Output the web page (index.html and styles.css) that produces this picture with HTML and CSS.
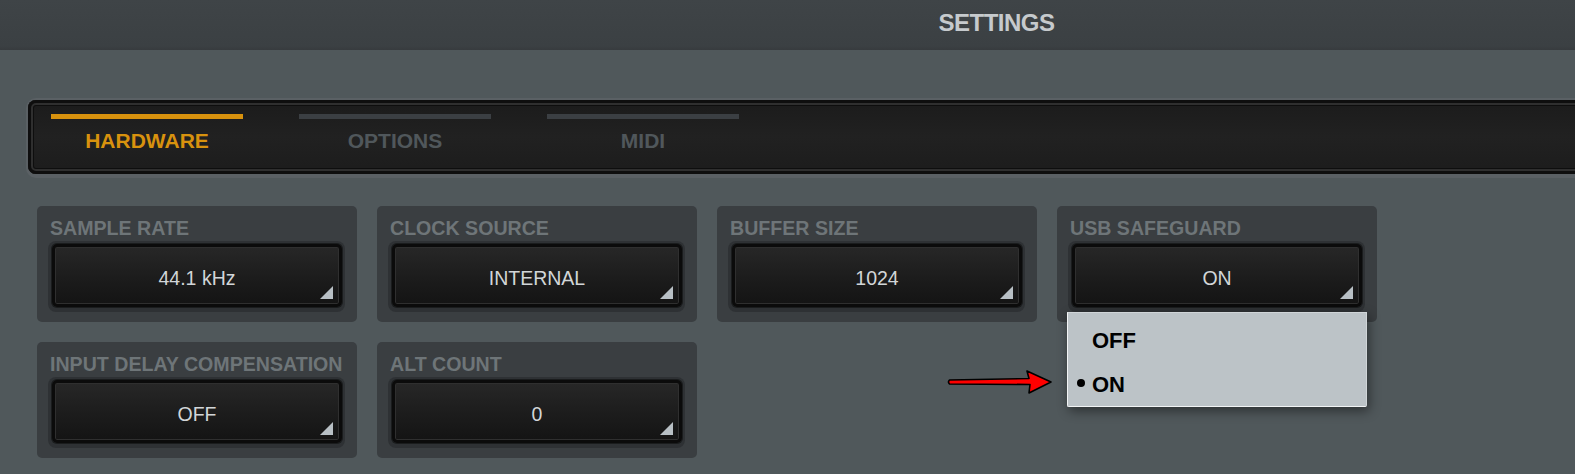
FILE: index.html
```html
<!DOCTYPE html>
<html>
<head>
<meta charset="utf-8">
<title>Settings</title>
<link rel="stylesheet" href="styles.css">
</head>
<body>
<div class="page">
  <header class="header"><h1 class="title">SETTINGS</h1></header>
  <main class="main">
    <div class="tabbar">
      <div class="tabframe">
        <div class="tab active"><span class="tab-line"></span><span class="tab-label">HARDWARE</span></div>
        <div class="tab"><span class="tab-line"></span><span class="tab-label">OPTIONS</span></div>
        <div class="tab"><span class="tab-line"></span><span class="tab-label">MIDI</span></div>
      </div>
    </div>
    <div class="grid">
      <div class="card">
        <div class="label">SAMPLE RATE</div>
        <div class="ring"><div class="select"><span class="value">44.1 kHz</span><span class="corner"></span></div></div>
      </div>
      <div class="card">
        <div class="label">CLOCK SOURCE</div>
        <div class="ring"><div class="select"><span class="value">INTERNAL</span><span class="corner"></span></div></div>
      </div>
      <div class="card">
        <div class="label">BUFFER SIZE</div>
        <div class="ring"><div class="select"><span class="value">1024</span><span class="corner"></span></div></div>
      </div>
      <div class="card card-open">
        <div class="label">USB SAFEGUARD</div>
        <div class="ring"><div class="select"><span class="value">ON</span><span class="corner"></span></div></div>
        <div class="menu">
          <div class="menu-item"><span class="bullet hidden"></span>OFF</div>
          <div class="menu-item"><span class="bullet"></span>ON</div>
        </div>
      </div>
      <div class="card">
        <div class="label">INPUT DELAY COMPENSATION</div>
        <div class="ring"><div class="select"><span class="value">OFF</span><span class="corner"></span></div></div>
      </div>
      <div class="card">
        <div class="label">ALT COUNT</div>
        <div class="ring"><div class="select"><span class="value">0</span><span class="corner"></span></div></div>
      </div>
    </div>
  </main>
  <svg class="arrow" width="116" height="32" viewBox="0 0 116 32">
    <path d="M9.5 14 L89 12.5 L87 5 L111 16 L89 27 L90 18.5 L9.5 18 Q7.5 16 9.5 14 Z" fill="#ff0000" stroke="#000" stroke-width="1.6" stroke-linejoin="round"/>
  </svg>
</div>
</body>
</html>
```
FILE: styles.css
```css
html, body {
  margin: 0;
  padding: 0;
}
body {
  background: #50585b;
  font-family: "Liberation Sans", Arial, sans-serif;
  overflow: hidden;
  width: 1575px;
  height: 474px;
}
.page {
  position: relative;
  width: 1575px;
  height: 474px;
}
.header {
  height: 50px;
  box-sizing: border-box;
  background: linear-gradient(#3f4447, #3b4043 92%, #373b3e);
  display: flex;
  align-items: center;
  justify-content: center;
  padding-left: 418px;
}
.title {
  margin: 0;
  font-size: 24px;
  font-weight: bold;
  letter-spacing: -0.5px;
  color: #c6cacd;
  line-height: 28px;
  padding-bottom: 4px;
}
.main {
  padding: 48px 0 0 26px;
}
.tabbar {
  margin-right: -30px;
  padding: 2px 0 4px 2px;
  background: #5a6064;
  border-radius: 10px 0 0 10px;
}
.tabframe {
  height: 74px;
  box-sizing: border-box;
  border-radius: 8px 0 0 8px;
  background: linear-gradient(#1b1b1b, #212121 50%, #1c1c1c);
  box-shadow: inset 0 0 0 3px #0e0e0e, inset 0 0 0 5px #2f2f2f, inset 0 0 0 6px #0e0e0e;
  display: flex;
  gap: 56px;
  padding: 14px 0 0 23px;
}
.tab {
  width: 192px;
  display: flex;
  flex-direction: column;
  align-items: center;
}
.tab-line {
  align-self: stretch;
  height: 5px;
  background: #3b3f43;
}
.tab-label {
  margin-top: 10px;
  font-size: 21px;
  font-weight: bold;
  line-height: 24px;
  color: #50575b;
}
.tab.active .tab-line {
  background: #d8920e;
}
.tab.active .tab-label {
  color: #d8920e;
}
.grid {
  margin: 28px 0 0 11px;
  display: grid;
  grid-template-columns: repeat(4, 320px);
  grid-auto-rows: 116px;
  gap: 20px;
}
.card {
  position: relative;
  background: #3a3e41;
  border-radius: 5px;
  padding: 11px 12px 10px 11px;
  box-sizing: border-box;
  display: flex;
  flex-direction: column;
}
.label {
  margin-left: 2px;
  font-size: 19.6px;
  font-weight: bold;
  line-height: 22px;
  color: #6e7578;
  white-space: nowrap;
}
.ring {
  margin-top: 2px;
  height: 71px;
  box-sizing: border-box;
  padding: 3px 3px 5px 4px;
  background: #2e3134;
  border-radius: 8px;
}
.select {
  position: relative;
  height: 100%;
  box-sizing: border-box;
  border: 3px solid #0b0b0b;
  border-radius: 5px;
  background: linear-gradient(#272727, #1c1c1c 55%, #141414);
  box-shadow: inset 0 0 0 1px #2f2f2f, 0 0 0 1px #1a1c1d;
  display: flex;
  align-items: center;
  justify-content: center;
  padding-top: 5px;
}
.value {
  font-size: 19.5px;
  line-height: 24px;
  color: #d2d6d8;
}
.corner {
  position: absolute;
  right: 6px;
  bottom: 5px;
  width: 13px;
  height: 13px;
  background: #b8c0c5;
  clip-path: polygon(100% 0, 100% 100%, 0 100%);
}
.menu {
  position: absolute;
  left: 10px;
  top: 106px;
  width: 300px;
  height: 95px;
  box-sizing: border-box;
  padding-top: 5.5px;
  background: #bcc3c7;
  border-left: 1px solid #f2f4f5;
  border-bottom: 1px solid #f2f4f5;
  border-top: 1px solid #d0d5d8;
  border-right: 1px solid #d0d5d8;
  border-radius: 0 0 2px 2px;
  box-shadow: 2px 4px 12px rgba(0, 0, 0, 0.45);
  z-index: 2;
}
.menu-item {
  height: 44px;
  display: flex;
  align-items: center;
  padding-left: 9px;
  font-size: 22px;
  font-weight: bold;
  color: #000;
}
.bullet {
  width: 8px;
  height: 8px;
  border-radius: 50%;
  background: #000;
  margin-right: 7px;
  margin-top: -4px;
}
.bullet.hidden {
  visibility: hidden;
}
.arrow {
  position: absolute;
  left: 940px;
  top: 366px;
  z-index: 3;
}
```
